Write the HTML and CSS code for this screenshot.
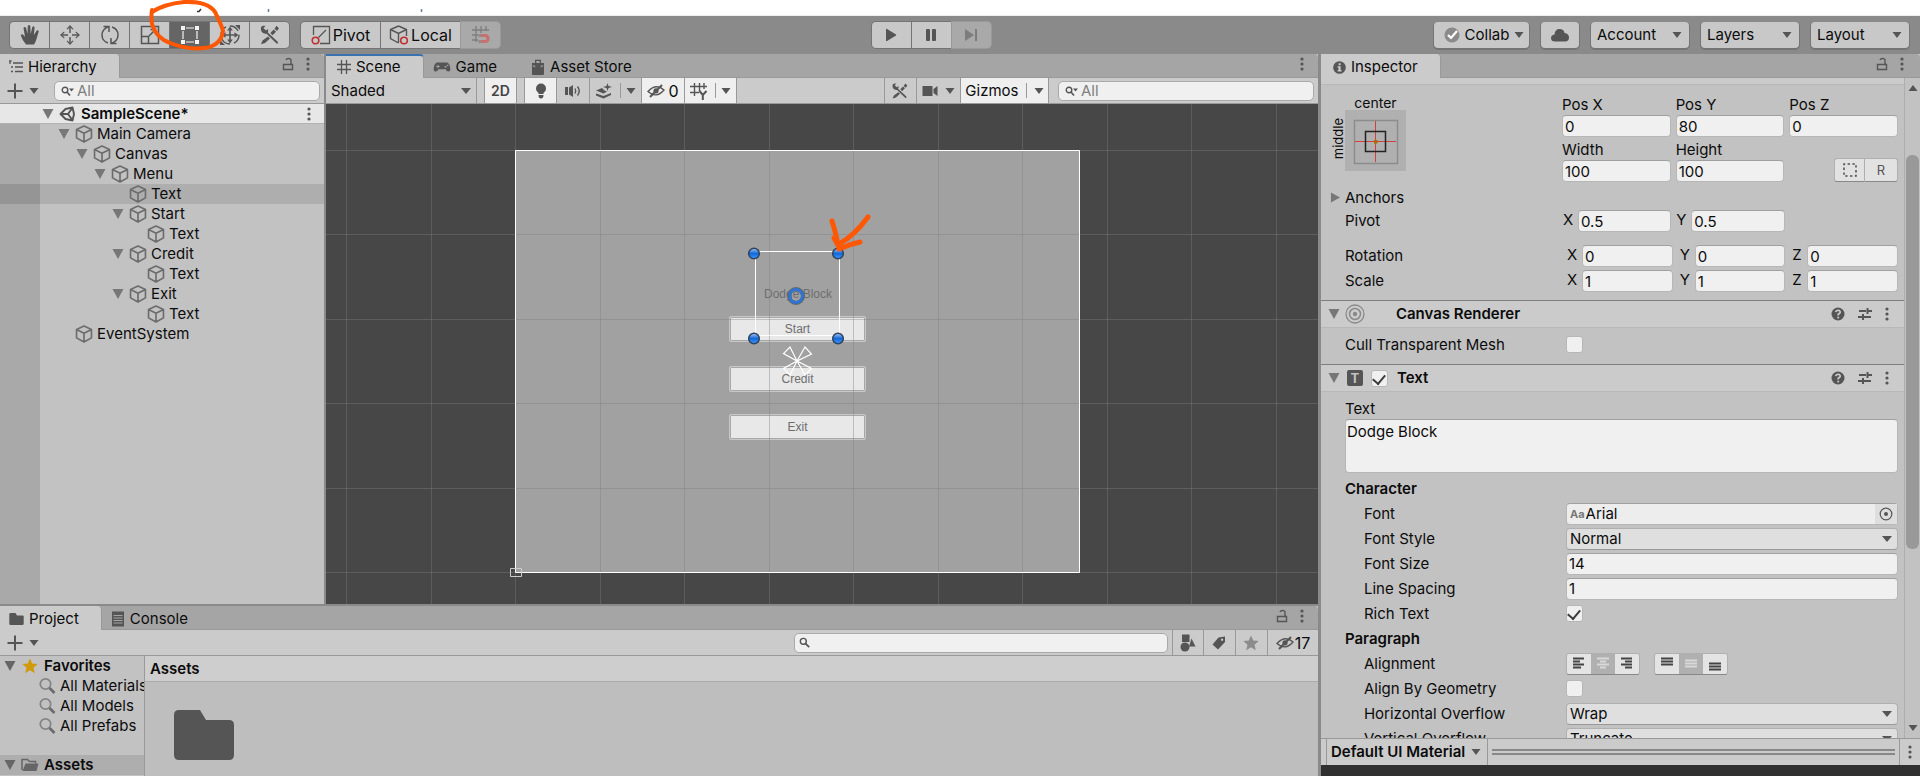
FILE: index.html
```html
<!DOCTYPE html>
<html lang="en">
<head>
    <meta charset="UTF-8">
    <meta name="viewport" content="width=device-width, initial-scale=1.0">
    <title>SampleScene</title>
    <link rel="stylesheet" href="styles.css">
</head>
<body>
    <!-- icon sprite -->
    <svg class="sprite" aria-hidden="true">
        <symbol id="i-cube" viewBox="0.7 0.2 16.6 17.6"><path d="M9 1.2 16.3 4.5 V12.8 L9 16.8 1.7 12.8 V4.5 Z M1.7 4.7 9 8.3 16.3 4.7 M9 8.3 V16.8" fill="none" stroke="currentColor" stroke-width="1.6" stroke-linejoin="round"/></symbol>
        <symbol id="i-dots" viewBox="0 0 4 14"><circle cx="2" cy="2" r="1.6"/><circle cx="2" cy="7" r="1.6"/><circle cx="2" cy="12" r="1.6"/></symbol>
        <symbol id="i-lock" viewBox="0 0 12 14"><path d="M1.5 7.5 H10.5 V12.5 H1.5 Z M9 7 V3.5 Q9 1.5 6.5 1.5 Q4.5 1.5 4 3" fill="none" stroke="currentColor" stroke-width="1.4"/></symbol>
        <symbol id="i-down" viewBox="0 0 10 10"><path d="M0.5 2 H9.5 L5 8 Z"/></symbol>
        <symbol id="i-fold" viewBox="0 0 12 12"><path d="M0.5 1 H11.5 L6 11 Z"/></symbol>
        <symbol id="i-right" viewBox="0 0 12 12"><path d="M1 0.5 V11.5 L11 6 Z"/></symbol>
        <symbol id="i-plus" viewBox="0 0 16 16"><path d="M7 0.5 H9 V7 H15.5 V9 H9 V15.5 H7 V9 H0.5 V7 H7 Z"/></symbol>
        <symbol id="i-search" viewBox="0 0 14 14"><circle cx="5.5" cy="5.5" r="3.8" fill="none" stroke="currentColor" stroke-width="1.8"/><path d="M8 8 13 13" stroke="currentColor" stroke-width="2.2"/></symbol>
        <symbol id="i-searchdd" viewBox="0 0 14 10"><circle cx="4" cy="4" r="2.8" fill="none" stroke="currentColor" stroke-width="1.4"/><path d="M6 6 9 9.5" stroke="currentColor" stroke-width="1.6"/><path d="M8 2.5 H13 L10.5 5.5 Z"/></symbol>
        <symbol id="i-glass" viewBox="0 0 18 18"><circle cx="7.5" cy="7" r="5.2" fill="none" stroke="currentColor" stroke-width="1.8"/><path d="M11.5 11 16.5 16" stroke="#6b6b6b" stroke-width="2.6"/></symbol>
        <symbol id="i-list" viewBox="0 0 14 14"><path d="M0 1 H2.5 M1 1 V4 M4 3 H14 M2 7 H4 M6 7 H14 M2 11.5 H4 M6 11.5 H14" fill="none" stroke="currentColor" stroke-width="1.3"/></symbol>
        <symbol id="i-grid" viewBox="0 0 14 14"><path d="M4.5 0 V14 M9.5 0 V14 M0 4.5 H14 M0 9.5 H14" fill="none" stroke="currentColor" stroke-width="1.3"/></symbol>
        <symbol id="i-pad" viewBox="0 0 20 12"><path fill-rule="evenodd" d="M5 1 H15 Q18 1 19 6 Q20 11 17 11 Q15 11 14 8.5 H6 Q5 11 3 11 Q0 11 1 6 Q2 1 5 1 Z M5 3.5 V5 H3.5 V6 H5 V7.5 H6 V6 H7.5 V5 H6 V3.5 Z M13 5 h2 v1.5 h-2 Z M15.5 3.5 h1.5 v1.5 h-1.5 Z"/></symbol>
        <symbol id="i-bag" viewBox="0 0 14 16"><path fill-rule="evenodd" d="M4 4 V0.8 H10 V4 H13 V15 Q13 16 12 16 H2 Q1 16 1 15 V4 Z M5.3 4 H8.7 V2 H5.3 Z M1.5 6.5 h2 l1 1 -1 .8 -1.5 -1 Z M12.5 6.5 h-2 l-1 1 1 .8 1.5 -1 Z"/></symbol>
        <symbol id="i-info" viewBox="0 0 14 14"><circle cx="7" cy="7" r="6.8"/><path d="M6 2.3 h2.2 v2.2 H6 Z M5 5.7 h3.2 v4 h1 v1.5 H5 v-1.5 h1 v-2.5 H5 Z" fill="#cbcbcb"/></symbol>
        <symbol id="i-unity" viewBox="0 0 16 16"><path d="M1.5 8 6.5 3 13.5 1.5 15 8 13.5 14.5 6.5 13 Z M1.5 8 H9 M9 8 13.5 1.8 M9 8 13.5 14.2" fill="none" stroke="currentColor" stroke-width="1.9" stroke-linejoin="round"/></symbol>
        <symbol id="i-tools" viewBox="0 0 22 22"><path d="M2 6 Q1 1 6.5 2 L4.5 4 7 6.5 9 5 Q9.5 7 8.8 8.5 L18.5 17.5 Q20 20 17.5 19.5 L7.5 9.7 Q3 10 2 6 Z M17.5 1.8 20 4.3 18 7 15.5 4.8 Z M14.8 5.5 17 7.7 13.5 11.2 11.3 9 Z M9 12.5 11 14.5 6 19 2 20.3 3.5 16.5 Z"/></symbol>
        <symbol id="i-hand" viewBox="0 0 20 22"><path d="M6 20.5 Q2.5 16.5 0.8 11.5 Q1.5 9.5 3.5 11 L5 13 3.5 4 Q4.5 2 6 3.8 L7.5 10 7.8 2 Q9 0 10.3 2 L10.7 10 12.3 3 Q13.7 1.5 14.6 3.4 L13.8 11 16.8 6.5 Q18.5 5.8 18.7 7.5 L16.5 15 Q15.5 18.5 14 20.5 Z"/></symbol>
        <symbol id="i-move" viewBox="0 0 22 22"><path d="M11 3 V9 M11 13 V19 M3 11 H9 M13 11 H19" fill="none" stroke="currentColor" stroke-width="1.5"/><path d="M8 5 H7.5 L11 1 14.5 5 13.5 5.5 11 3 8.5 5.5 Z M8 17 7.5 17 11 21 14.5 17 13.5 16.5 11 19 8.5 16.5 Z M5 7.5 1 11 5 14.5 5.5 13.5 3 11 5.5 8.5 Z M17 7.5 21 11 17 14.5 16.5 13.5 19 11 16.5 8.5 Z"/></symbol>
        <symbol id="i-rotate" viewBox="0 0 22 22"><path d="M9 19 Q3 17 3 11 Q3 5 10 2.5 M13 3 Q19 5 19 11 Q19 17 12 19.5 M4.5 2.5 H10 V8 M17.5 19.5 H12 V14" fill="none" stroke="currentColor" stroke-width="1.5"/></symbol>
        <symbol id="i-scale" viewBox="0 0 22 22"><path d="M2.5 2.5 H19.5 V19.5 H2.5 Z M2.5 12.5 H9.5 V19.5 M10 12 16 6 M11.5 5.5 H16.5 V10.5" fill="none" stroke="currentColor" stroke-width="1.5"/></symbol>
        <symbol id="i-rect" viewBox="0 0 20 20"><path d="M3 6 V14 M17 6 V14 M6 3 H14 M6 17 H14" fill="none" stroke="currentColor" stroke-width="1.2"/><path d="M1 1 h4 v4 h-4 Z M15 1 h4 v4 h-4 Z M1 15 h4 v4 h-4 Z M15 15 h4 v4 h-4 Z"/></symbol>
        <symbol id="i-transform" viewBox="0 0 22 22"><circle cx="11" cy="11" r="9" fill="none" stroke="currentColor" stroke-width="1.4" stroke-dasharray="10 4"/><path d="M11 4 V18 M4 11 H18" stroke="currentColor" stroke-width="1.6"/><path d="M11 2.5 13.8 6.5 H8.2 Z M11 19.5 13.8 15.5 H8.2 Z M2.5 11 6.5 8.2 V13.8 Z M19.5 11 15.5 8.2 V13.8 Z M16 1 H21 V6 Z M1 16 V21 H6 Z"/></symbol>
        <symbol id="i-pivot" viewBox="0 0 20 20"><path d="M2.5 10 V1.5 H18.5 V18.5 H9 M7.5 12.5 15 5" fill="none" stroke="currentColor" stroke-width="1.3"/><circle cx="4.5" cy="15.5" r="3.3" fill="none" stroke="#c03030" stroke-width="1.6"/></symbol>
        <symbol id="i-local" viewBox="0 0 20 20"><path d="M9.5 1 17.5 4.5 V11 M9.5 18 1.5 13.5 V4.5 L9.5 1 M1.5 4.5 9.5 8.5 17.5 4.5 M9.5 8.5 V18" fill="none" stroke="currentColor" stroke-width="1.4"/><circle cx="15" cy="15.5" r="3.3" fill="none" stroke="#c03030" stroke-width="1.6"/></symbol>
        <symbol id="i-snap" viewBox="0 0 20 20"><path d="M5 1 V17 M10 1 V8 M15 1 V6 M1 5 H18 M1 10 H7 M1 15 H7" fill="none" stroke="currentColor" stroke-width="1.3"/><path d="M9 10.5 H14 Q17 10.5 17 13.5 Q17 16.5 14 16.5 H9" fill="none" stroke="#c87070" stroke-width="3"/><path d="M7.500 9 h2.500 v3 h-2.500 Z M7.500 15 h2.500 v3 h-2.500 Z" fill="#8c8c8c"/></symbol>
        <symbol id="i-play" viewBox="0 0 12 14"><path d="M1 1.5 Q1 0.5 2 1 L11 6.5 Q11.5 7 11 7.5 L2 13 Q1 13.5 1 12.5 Z"/></symbol>
        <symbol id="i-pause" viewBox="0 0 12 14"><rect x="1" y="1" width="4" height="12" rx="1"/><rect x="7" y="1" width="4" height="12" rx="1"/></symbol>
        <symbol id="i-step" viewBox="0 0 14 14"><path d="M1 1 10 7 1 13 Z M11 1 h2 v12 h-2 Z"/></symbol>
        <symbol id="i-cloud" viewBox="0 0 20 14"><path d="M5 13.5 Q1 13.5 1 10 Q1 7 4.5 6.5 Q5 1 9.5 1 Q14 1 14.5 5 Q19 5.5 19 9.5 Q19 13.5 15 13.5 Z"/></symbol>
        <symbol id="i-bulb" viewBox="0 0 12 16"><circle cx="6" cy="5.5" r="5"/><path d="M3.5 8 H8.5 V11 H3.5 Z M3.5 12 H8.5 Q8.5 15.5 6 15.5 Q3.5 15.5 3.5 12 Z"/></symbol>
        <symbol id="i-sound" viewBox="0 0 18 14"><path d="M1 3 H4 V11 H1 Z M5 3.500 9 1 V13 L5 10.500 Z"/><path d="M11 4.5 Q12.5 7 11 9.5 M13.5 2.5 Q17 7 13.5 11.5" fill="none" stroke="currentColor" stroke-width="1.4"/></symbol>
        <symbol id="i-fx" viewBox="0 0 18 16"><path d="M12.5 0 13.5 3 17 4 13.5 5 12.5 8 11.5 5 8 4 11.5 3 Z M1 7.5 7 5 9.5 7.5 12 8.5 8.5 10.5 Z M1 10.5 8.5 13 16 10 16 12 8.5 15.5 1 12.5 Z"/></symbol>
        <symbol id="i-eye" viewBox="0 0 18 14"><path d="M1 7.5 Q9 -1 17 6 Q9 15 1 7.5 Z" fill="none" stroke="currentColor" stroke-width="1.4"/><circle cx="9" cy="6.8" r="2.6"/><path d="M3 13 15 1" stroke="currentColor" stroke-width="2"/></symbol>
        <symbol id="i-gridy" viewBox="0 0 18 18"><path d="M4.5 1 V14 M9.5 1 V9 M14 1 V7 M0 4.5 H17 M0 10.5 H9" fill="none" stroke="currentColor" stroke-width="1.4"/><path d="M9.5 9 12.8 13 16.5 9 M12.8 13 V18" fill="none" stroke="currentColor" stroke-width="2"/></symbol>
        <symbol id="i-cam" viewBox="0 0 16 12"><path d="M0.5 1 H10.5 V11 H0.5 Z M11.5 4 15.5 1 V11 L11.5 8 Z"/></symbol>
        <symbol id="i-help" viewBox="0 0 14 14"><circle cx="7" cy="7" r="6.5"/><path d="M4.7 5.2 Q5 3.2 7.2 3.2 Q9.5 3.5 9.2 5.5 Q8.5 6.7 7.2 7.3 V8.5" fill="none" stroke="#cbcbcb" stroke-width="1.6"/><path d="M6.3 9.7 h1.8 v1.7 h-1.8 Z" fill="#cbcbcb"/></symbol>
        <symbol id="i-preset" viewBox="0 0 14 14"><path d="M1 4 H8 M10 4 H14 M0 10 H4 M6 10 H13 M9.5 1 V7 M5 7 V13" fill="none" stroke="currentColor" stroke-width="2"/></symbol>
        <symbol id="i-target" viewBox="0 0 20 20"><circle cx="10" cy="10" r="9" fill="none" stroke="currentColor" stroke-width="1.3"/><circle cx="10" cy="10" r="5.5" fill="none" stroke="currentColor" stroke-width="1.5"/><circle cx="10" cy="10" r="2.2"/></symbol>
        <symbol id="i-picker" viewBox="0 0 14 14"><circle cx="7" cy="7" r="5.8" fill="none" stroke="currentColor" stroke-width="1.2"/><circle cx="7" cy="7" r="2"/></symbol>
        <symbol id="i-folder" viewBox="0 0 60 50"><path d="M5 0 H26 L32 10 H55 Q60 10 60 15 V45 Q60 50 55 50 H5 Q0 50 0 45 V5 Q0 0 5 0 Z"/></symbol>
        <symbol id="i-folderopen" viewBox="0 0 18 14"><path d="M1 12 V1.5 H6.5 L8.5 3.5 H14.5 V5.5" fill="none" stroke="currentColor" stroke-width="1.5"/><path d="M4.5 5.5 H17.5 L15.5 13 H1.5 Z"/></symbol>
        <symbol id="i-doc" viewBox="0 0 14 16"><path d="M1 0.5 H13 V15.5 H1 Z"/><path d="M2.5 4.5 H11.5 M2.5 7 H11.5 M2.5 9.5 H11.5 M2.5 12 H11.5" stroke="#a5a5a5"/></symbol>
        <symbol id="i-star" viewBox="0 0 16 16"><path d="M8 0.5 10.2 5.5 15.7 6 11.5 9.7 12.8 15.3 8 12.3 3.2 15.3 4.5 9.7 0.3 6 5.8 5.5 Z"/></symbol>
        <symbol id="i-shapes" viewBox="0 0 16 18"><path d="M2 0.5 h7.5 v7.5 h-7.5 Z M11.5 4.5 15.5 12.5 H9 Z"/><circle cx="5" cy="13" r="4.5"/></symbol>
        <symbol id="i-tag" viewBox="0 0 14 14"><path fill-rule="evenodd" d="M6.5 1.5 13 0.5 V6 L6 13.5 0.5 8.5 Z M10 2.5 a1.2 1.2 0 1 0 .1 0 Z"/></symbol>
        <symbol id="i-dashed" viewBox="0 0 14 14"><path d="M1 1 H13 V13 H1 Z" fill="none" stroke="currentColor" stroke-width="1.6" stroke-dasharray="2.4 2.4" stroke-dashoffset="1.200"/></symbol>
    </svg>

    <div class="strip">
        <svg width="440" height="15" aria-hidden="true"><path d="M197 11.5 H199 L201 9" fill="none" stroke="#333" stroke-width="1.5"/><path d="M268.5 9 V12 M421.5 9 V12" stroke="#6a7d9c" stroke-width="1.5"/></svg>
    </div>

    <header class="toolbar">
        <div class="tools">
            <div class="group">
                <button class="tool" aria-label="Hand"><svg width="20" height="22"><use href="#i-hand"/></svg></button>
                <button class="tool" aria-label="Move"><svg width="22" height="22"><use href="#i-move"/></svg></button>
                <button class="tool" aria-label="Rotate"><svg width="22" height="22"><use href="#i-rotate"/></svg></button>
                <button class="tool" aria-label="Scale"><svg width="22" height="22"><use href="#i-scale"/></svg></button>
                <button class="tool on" aria-label="Rect">
                    <svg width="20" height="20"><use href="#i-rect"/></svg>
                    <svg class="circle" width="82" height="58" viewBox="0 0 82 58" aria-hidden="true"><path d="M6 15 Q18 7 38 5 Q62 4 69 15 Q76 29 77 34 Q75 49 58 51 Q42 53 24 46 Q10 41 6 27 Q5 18 6 13" fill="none" stroke="#ff5805" stroke-width="4" stroke-linecap="round"/></svg>
                </button>
                <button class="tool" aria-label="Transform"><svg width="22" height="22"><use href="#i-transform"/></svg></button>
                <button class="tool" aria-label="Custom tools"><svg width="22" height="22"><use href="#i-tools"/></svg></button>
            </div>
            <div class="group">
                <button class="tool wide"><svg width="20" height="20"><use href="#i-pivot"/></svg>Pivot</button>
                <button class="tool wide"><svg width="20" height="20"><use href="#i-local"/></svg>Local</button>
                <button class="tool off" aria-label="Grid snapping" disabled><svg width="20" height="20"><use href="#i-snap"/></svg></button>
            </div>
        </div>
        <div class="group">
            <button class="tool" aria-label="Play"><svg width="12" height="14"><use href="#i-play"/></svg></button>
            <button class="tool" aria-label="Pause"><svg width="12" height="14"><use href="#i-pause"/></svg></button>
            <button class="tool off" aria-label="Step" disabled><svg width="14" height="14"><use href="#i-step"/></svg></button>
        </div>
        <div class="menus">
            <button class="menu collab"><svg width="16" height="16" viewBox="0 0 16 16"><circle cx="8" cy="8" r="7.5" fill="#8a8a8a"/><path d="M4 8 7 11 13 4" fill="none" stroke="#fff" stroke-width="2.2"/></svg>Collab<svg width="10" height="10"><use href="#i-down"/></svg></button>
            <button class="menu cloud" aria-label="Cloud"><svg width="20" height="14"><use href="#i-cloud"/></svg></button>
            <button class="menu">Account<svg width="10" height="10"><use href="#i-down"/></svg></button>
            <button class="menu">Layers<svg width="10" height="10"><use href="#i-down"/></svg></button>
            <button class="menu">Layout<svg width="10" height="10"><use href="#i-down"/></svg></button>
        </div>
    </header>

    <main class="workspace">
        <div class="left">
            <div class="upper">
                <section class="panel hierarchy">
                    <div class="tabs">
                        <button class="tab active"><svg width="14" height="14"><use href="#i-list"/></svg>Hierarchy</button>
                        <div class="tab-end"><svg width="12" height="14"><use href="#i-lock"/></svg><svg width="4" height="14"><use href="#i-dots"/></svg></div>
                    </div>
                    <div class="bar">
                        <button class="add" aria-label="Create"><svg width="16" height="16"><use href="#i-plus"/></svg><svg width="10" height="10"><use href="#i-down"/></svg></button>
                        <label class="search grow"><svg width="14" height="10"><use href="#i-searchdd"/></svg><input type="text" placeholder="All" aria-label="Search hierarchy"></label>
                    </div>
                    <div class="scene-row"><svg class="fold" width="12" height="12"><use href="#i-fold"/></svg><svg width="16" height="16"><use href="#i-unity"/></svg><b>SampleScene*</b><svg class="end" width="4" height="14"><use href="#i-dots"/></svg></div>
                    <ul class="tree">
                        <li><span class="node"><svg class="fold" width="12" height="12"><use href="#i-fold"/></svg><svg width="18" height="18"><use href="#i-cube"/></svg>Main Camera</span>
                            <ul>
                                <li><span class="node"><svg class="fold" width="12" height="12"><use href="#i-fold"/></svg><svg width="18" height="18"><use href="#i-cube"/></svg>Canvas</span>
                                    <ul>
                                        <li><span class="node"><svg class="fold" width="12" height="12"><use href="#i-fold"/></svg><svg width="18" height="18"><use href="#i-cube"/></svg>Menu</span>
                                            <ul>
                                                <li><span class="node leaf selected"><svg width="18" height="18"><use href="#i-cube"/></svg>Text</span></li>
                                                <li><span class="node"><svg class="fold" width="12" height="12"><use href="#i-fold"/></svg><svg width="18" height="18"><use href="#i-cube"/></svg>Start</span>
                                                    <ul><li><span class="node leaf"><svg width="18" height="18"><use href="#i-cube"/></svg>Text</span></li></ul>
                                                </li>
                                                <li><span class="node"><svg class="fold" width="12" height="12"><use href="#i-fold"/></svg><svg width="18" height="18"><use href="#i-cube"/></svg>Credit</span>
                                                    <ul><li><span class="node leaf"><svg width="18" height="18"><use href="#i-cube"/></svg>Text</span></li></ul>
                                                </li>
                                                <li><span class="node"><svg class="fold" width="12" height="12"><use href="#i-fold"/></svg><svg width="18" height="18"><use href="#i-cube"/></svg>Exit</span>
                                                    <ul><li><span class="node leaf"><svg width="18" height="18"><use href="#i-cube"/></svg>Text</span></li></ul>
                                                </li>
                                            </ul>
                                        </li>
                                    </ul>
                                </li>
                            </ul>
                        </li>
                        <li><span class="node leaf"><svg width="18" height="18"><use href="#i-cube"/></svg>EventSystem</span></li>
                    </ul>
                </section>

                <section class="panel scene">
                    <div class="tabs">
                        <button class="tab active focus"><svg width="14" height="14"><use href="#i-grid"/></svg>Scene</button>
                        <button class="tab"><svg width="18" height="12"><use href="#i-pad"/></svg>Game</button>
                        <button class="tab"><svg width="14" height="16"><use href="#i-bag"/></svg>Asset Store</button>
                        <div class="tab-end"><svg width="4" height="14"><use href="#i-dots"/></svg></div>
                    </div>
                    <div class="bar scene-bar">
                        <span class="select shaded"><select aria-label="Draw mode"><option>Shaded</option></select></span>
                        <button class="cell lit two-d">2D</button>
                        <button class="cell lit" aria-label="Lighting"><svg width="12" height="16"><use href="#i-bulb"/></svg></button>
                        <button class="cell" aria-label="Audio"><svg width="18" height="14"><use href="#i-sound"/></svg></button>
                        <button class="cell split" aria-label="Effects"><svg width="18" height="16"><use href="#i-fx"/></svg><i></i><svg width="10" height="10"><use href="#i-down"/></svg></button>
                        <button class="cell lit hidden-count"><svg width="18" height="14"><use href="#i-eye"/></svg>0</button>
                        <button class="cell lit split" aria-label="Grid"><svg width="18" height="18"><use href="#i-gridy"/></svg><i></i><svg width="10" height="10"><use href="#i-down"/></svg></button>
                        <span class="grow"></span>
                        <button class="cell first" aria-label="Tools"><svg width="18" height="18"><use href="#i-tools"/></svg></button>
                        <button class="cell cam" aria-label="Camera"><svg width="16" height="12"><use href="#i-cam"/></svg><svg width="10" height="10"><use href="#i-down"/></svg></button>
                        <button class="cell lit gizmos">Gizmos<i></i><svg width="10" height="10"><use href="#i-down"/></svg></button>
                        <label class="search scene-search"><svg width="14" height="10"><use href="#i-searchdd"/></svg><input type="text" placeholder="All" aria-label="Search scene"></label>
                    </div>
                    <div class="viewport">
                        <!-- the game canvas, everything in it sits at its own scene position -->
                        <div class="game-canvas">
                            <span class="title">Dodge Block</span>
                            <button class="game-btn start">Start</button>
                            <button class="game-btn credit">Credit</button>
                            <button class="game-btn exit">Exit</button>
                        </div>
                        <svg class="overlay" width="992" height="500" viewBox="0 0 992 500" aria-hidden="true">
                            <defs>
                                <linearGradient id="knob" x1="0" y1="0" x2="0" y2="1"><stop offset="0" stop-color="#a8c8f0"/><stop offset=".5" stop-color="#1468d8"/><stop offset="1" stop-color="#3c98ff"/></linearGradient>
                            </defs>
                            <path class="grid-lines" d="M20.5 0 V500 M105.5 0 V500 M189.5 0 V500 M274.5 0 V500 M358.5 0 V500 M443.5 0 V500 M527.5 0 V500 M612.5 0 V500 M696.5 0 V500 M781.5 0 V500 M865.5 0 V500 M950.5 0 V500 M0 46.5 H992 M0 130.5 H992 M0 215.5 H992 M0 299.5 H992 M0 384.5 H992 M0 468.5 H992"/>
                            <path d="M189.5 46.5 H753.5 V468.5 H189.5 Z" fill="none" stroke="#fff"/>
                            <path d="M184.5 464.5 H195.5 V472.5 H184.5 Z" fill="none" stroke="#ccc"/>
                            <path d="M429.5 147.5 H513.5 V231.5 H429.5 Z" fill="none" stroke="#fff"/>
                            <g fill="url(#knob)" stroke="#30435e" stroke-width="1.5">
                                <circle cx="428" cy="149.5" r="5.3"/><circle cx="512" cy="149.5" r="5.3"/><circle cx="428" cy="234.5" r="5.3"/><circle cx="512" cy="234.5" r="5.3"/>
                            </g>
                            <circle cx="470" cy="192" r="7" fill="none" stroke="#666" stroke-width="4"/>
                            <circle cx="470" cy="192" r="6.5" fill="none" stroke="#2f74d0" stroke-width="3"/>
                            <path d="M471 257 464 243 457.5 249.5 Z M471 257 479 243 485.5 250 Z M471 257 457.5 264.5 464 271 Z M471 257 485.5 264.5 479 271 Z" fill="none" stroke="#fff" stroke-width="1.2"/>
                            <path d="M506 117 Q510 130 511 136 L508 134 L513 143 M542 113 Q528 132 513 140 M534 138 Q524 140 513 145" fill="none" stroke="#ff5805" stroke-width="5" stroke-linecap="round" stroke-linejoin="round"/>
                        </svg>
                    </div>
                </section>
            </div>

            <section class="panel project">
                <div class="tabs">
                    <button class="tab active"><svg width="15" height="12"><use href="#i-folder"/></svg>Project</button>
                    <button class="tab"><svg width="14" height="16"><use href="#i-doc"/></svg>Console</button>
                    <div class="tab-end"><svg width="12" height="14"><use href="#i-lock"/></svg><svg width="4" height="14"><use href="#i-dots"/></svg></div>
                </div>
                <div class="bar">
                    <button class="add" aria-label="Create asset"><svg width="16" height="16"><use href="#i-plus"/></svg><svg width="10" height="10"><use href="#i-down"/></svg></button>
                    <span class="grow"></span>
                    <label class="search project-search"><svg width="11" height="11"><use href="#i-search"/></svg><input type="text" aria-label="Search project"></label>
                    <button class="cell first" aria-label="Search by type"><svg width="16" height="18"><use href="#i-shapes"/></svg></button>
                    <button class="cell" aria-label="Search by label"><svg width="14" height="14"><use href="#i-tag"/></svg></button>
                    <button class="cell dim" aria-label="Save search"><svg width="16" height="16"><use href="#i-star"/></svg></button>
                    <button class="cell hidden-count last"><svg width="18" height="14"><use href="#i-eye"/></svg>17</button>
                </div>
                <div class="browser">
                    <ul class="folders">
                        <li class="head"><svg class="fold" width="12" height="12"><use href="#i-fold"/></svg><svg class="gold" width="18" height="16"><use href="#i-star"/></svg><b>Favorites</b></li>
                        <li><svg width="18" height="18"><use href="#i-glass"/></svg>All Materials</li>
                        <li><svg width="18" height="18"><use href="#i-glass"/></svg>All Models</li>
                        <li><svg width="18" height="18"><use href="#i-glass"/></svg>All Prefabs</li>
                        <li class="head root"><svg class="fold" width="12" height="12"><use href="#i-fold"/></svg><svg width="18" height="14"><use href="#i-folderopen"/></svg><b>Assets</b></li>
                    </ul>
                    <div class="files">
                        <div class="crumb"><b>Assets</b></div>
                        <svg class="big-folder" width="60" height="50"><use href="#i-folder"/></svg>
                    </div>
                </div>
            </section>
        </div>

        <section class="panel inspector">
            <div class="tabs">
                <button class="tab active"><svg width="13" height="13"><use href="#i-info"/></svg>Inspector</button>
                <div class="tab-end"><svg width="12" height="14"><use href="#i-lock"/></svg><svg width="4" height="14"><use href="#i-dots"/></svg></div>
            </div>
            <div class="scroll">
                <div class="content">
                    <div class="cut"></div>
                    <div class="rect-transform">
                        <div class="rect-top">
                            <div class="anchor">
                                <span class="middle">middle</span>
                                <span class="center">center</span>
                                <button class="anchor-box" aria-label="Anchor presets">
                                    <svg width="60" height="60" viewBox="0 0 60 60"><path d="M9.5 9.5 H52.5 V52.5 H9.5 Z" fill="none" stroke="#8c8c8c" stroke-width="1.5"/><path d="M30.5 10 V51 M10 30.5 H51" stroke="#d04040"/><path d="M20.5 20.5 H40.5 V40.5 H20.5 Z" fill="none" stroke="#222" stroke-width="1.5"/><path d="M29 29 h3.5 v3.5 h-3.5 Z" fill="#a86c00"/></svg>
                                </button>
                            </div>
                            <div class="numbers">
                                <label>Pos X<input type="text" value="0"></label>
                                <label>Pos Y<input type="text" value="80"></label>
                                <label>Pos Z<input type="text" value="0"></label>
                                <label>Width<input type="text" value="100"></label>
                                <label>Height<input type="text" value="100"></label>
                                <div class="raw"><button aria-label="Blueprint mode"><svg width="14" height="14"><use href="#i-dashed"/></svg></button><button>R</button></div>
                            </div>
                        </div>
                        <div class="vec anchors-row"><span><svg class="fold" width="11" height="11"><use href="#i-right"/></svg>Anchors</span></div>
                        <div class="vec pivot-row"><span>Pivot</span><label>X<input type="text" value="0.5"></label><label>Y<input type="text" value="0.5"></label></div>
                        <div class="vec"><span>Rotation</span><label>X<input type="text" value="0"></label><label>Y<input type="text" value="0"></label><label>Z<input type="text" value="0"></label></div>
                        <div class="vec"><span>Scale</span><label>X<input type="text" value="1"></label><label>Y<input type="text" value="1"></label><label>Z<input type="text" value="1"></label></div>
                    </div>

                    <div class="comp-head">
                        <svg class="fold" width="12" height="12"><use href="#i-fold"/></svg>
                        <svg class="dimmed" width="20" height="20"><use href="#i-target"/></svg>
                        <h2>Canvas Renderer</h2>
                        <span class="comp-icons"><svg width="14" height="14"><use href="#i-help"/></svg><svg width="14" height="14"><use href="#i-preset"/></svg><svg width="4" height="14"><use href="#i-dots"/></svg></span>
                    </div>
                    <div class="comp-body cull">
                        <div class="row"><label for="cull">Cull Transparent Mesh</label><input type="checkbox" id="cull"></div>
                    </div>

                    <div class="comp-head">
                        <svg class="fold" width="12" height="12"><use href="#i-fold"/></svg>
                        <span class="t-icon">T</span>
                        <input type="checkbox" aria-label="Enable Text" checked>
                        <h2>Text</h2>
                        <span class="comp-icons"><svg width="14" height="14"><use href="#i-help"/></svg><svg width="14" height="14"><use href="#i-preset"/></svg><svg width="4" height="14"><use href="#i-dots"/></svg></span>
                    </div>
                    <div class="comp-body">
                        <label class="text-label" for="text">Text</label>
                        <textarea id="text">Dodge Block</textarea>
                        <h3>Character</h3>
                        <div class="row sub"><label for="font">Font</label><div class="object"><small>Aa</small><input type="text" id="font" value="Arial"><button aria-label="Pick font"><svg width="14" height="14"><use href="#i-picker"/></svg></button></div></div>
                        <div class="row sub"><label for="style">Font Style</label><span class="select"><select id="style"><option>Normal</option></select></span></div>
                        <div class="row sub"><label for="size">Font Size</label><input type="text" id="size" value="14"></div>
                        <div class="row sub"><label for="spacing">Line Spacing</label><input type="text" id="spacing" value="1"></div>
                        <div class="row sub"><label for="rich">Rich Text</label><input type="checkbox" id="rich" checked></div>
                        <h3>Paragraph</h3>
                        <div class="row sub"><span>Alignment</span>
                            <div class="aligns">
                                <div class="seg">
                                    <button aria-label="Left"><svg width="14" height="14"><path d="M1 1.500 H12 M1 4.500 H8 M1 7.500 H12 M1 10.500 H9"/></svg></button>
                                    <button class="on" aria-label="Center"><svg width="14" height="14"><path d="M1 1.500 H13 M4 4.500 H10 M1 7.500 H13 M4 10.500 H10"/></svg></button>
                                    <button aria-label="Right"><svg width="14" height="14"><path d="M1 1.500 H12 M5 4.500 H12 M1 7.500 H12 M5 10.500 H12"/></svg></button>
                                </div>
                                <div class="seg">
                                    <button aria-label="Top"><svg width="14" height="14"><path d="M1 1.500 H13 M1 4.500 H13 M1 7.500 H13"/></svg></button>
                                    <button class="on" aria-label="Middle"><svg width="14" height="14"><path d="M1 3.500 H13 M1 6.500 H13 M1 9.500 H13"/></svg></button>
                                    <button aria-label="Bottom"><svg width="14" height="14"><path d="M1 6.500 H13 M1 9.500 H13 M1 12.500 H13"/></svg></button>
                                </div>
                            </div>
                        </div>
                        <div class="row sub"><label for="geometry">Align By Geometry</label><input type="checkbox" id="geometry"></div>
                        <div class="row sub"><label for="hover">Horizontal Overflow</label><span class="select"><select id="hover"><option>Wrap</option></select></span></div>
                        <div class="row sub"><label for="vover">Vertical Overflow</label><span class="select"><select id="vover"><option>Truncate</option></select></span></div>
                    </div>
                </div>
                <div class="scrollbar">
                    <svg class="up" width="10" height="10"><use href="#i-down"/></svg>
                    <div class="thumb"></div>
                    <svg width="10" height="10"><use href="#i-down"/></svg>
                </div>
            </div>
            <div class="preview-bar">
                <button><b>Default UI Material</b><svg width="10" height="10"><use href="#i-down"/></svg></button>
                <span class="grip"></span>
                <span class="more"><svg width="4" height="14"><use href="#i-dots"/></svg></span>
            </div>
            <div class="preview"></div>
        </section>
    </main>
</body>
</html>
```
FILE: styles.css
```css
* {
    box-sizing: border-box;
}
body {
    margin: 0;
    height: 100vh;
    display: flex;
    flex-direction: column;
    overflow: hidden;
    background: #8a8a8a;
    color: #0c0c0c;
    font-family: Inter, "Liberation Sans", sans-serif;
    font-size: 15px;
    line-height: 20px;
}
button, input, select, textarea {
    margin: 0;
    padding: 0;
    border: none;
    border-radius: 0;
    outline: none;
    background: none;
    color: inherit;
    font: inherit;
}
button {
    display: flex;
    align-items: center;
    justify-content: center;
    white-space: nowrap;
}
svg {
    flex: none;
    fill: currentColor;
    color: #555;
}
ul {
    list-style: none;
    margin: 0;
    padding: 0;
}
b, h2, h3 {
    margin: 0;
    font-size: 15px;
    font-weight: 600;
}
.sprite {
    position: absolute;
    width: 0;
    height: 0;
}
.fold {
    color: #777;
}
.grow {
    flex: 1;
}
.strip {
    height: 16px;
    flex: none;
    background: #fff;
    border-bottom: 1px solid #eee;
}
.strip svg {
    display: block;
}

/* main toolbar */
.toolbar {
    flex: none;
    height: 38px;
    padding: 6px 11px 0 10px;
    display: grid;
    grid-template-columns: 1fr auto 1.066fr;
    align-items: start;
}
.tools {
    display: flex;
    gap: 12px;
}
.group {
    display: flex;
    gap: 1px;
}
.tool {
    position: relative;
    width: 39px;
    height: 26px;
    background: #c8c8c8;
    box-shadow: 0 0 0 1px #747474;
}
.tool:first-child {
    border-radius: 4px 0 0 4px;
}
.tool:last-child {
    border-radius: 0 4px 4px 0;
}
.tool.on {
    background: #656565;
}
.tool.on svg {
    color: #f4f4f4;
}
.tool.off {
    background: #a9a9a9;
    box-shadow: 0 0 0 1px #999;
}
.tool.off svg {
    color: #7d7d7d;
}
.tool.wide {
    width: 79px;
    gap: 2px;
    font-size: 16px;
}
.circle {
    position: absolute;
    left: -24px;
    top: -25px;
    z-index: 5;
}
.menus {
    display: flex;
    justify-content: flex-end;
    gap: 12px;
}
.menu {
    width: 98px;
    height: 26px;
    padding: 0 7px 0 6px;
    justify-content: space-between;
    background: #c8c8c8;
    border-radius: 4px;
    box-shadow: 0 1px 0 1px #757575;
}
.menu.collab {
    width: 95px;
    padding: 0 5px 0 10px;
    gap: 3px;
}
.menu.cloud {
    width: 38px;
    justify-content: center;
}

/* docked panels */
.workspace {
    flex: 1;
    min-height: 0;
    display: grid;
    grid-template-columns: minmax(0, 2.2fr) minmax(0, 1fr);
    gap: 3px;
}
.left {
    min-height: 0;
    display: grid;
    grid-template-rows: minmax(0, 1fr) 170px;
    gap: 2px;
}
.upper {
    min-height: 0;
    display: grid;
    grid-template-columns: 324px minmax(0, 1fr);
    gap: 2px;
}
.panel {
    display: flex;
    flex-direction: column;
    min-height: 0;
    min-width: 0;
    background: #c2c2c2;
}
.tabs {
    flex: none;
    display: flex;
    height: 24px;
    background: #a5a5a5;
    border-bottom: 1px solid #999;
    border-radius: 0 4px 0 0;
}
.tab {
    height: 23px;
    padding: 2px 22px 0 9px;
    gap: 5px;
}
.tab.active {
    height: 24px;
    background: #cbcbcb;
    border-right: 1px solid #999;
    border-radius: 0 4px 0 0;
}
.tab.focus {
    padding: 0 22px 0 11px;
    border-top: 2px solid #3a72b0;
}
.scene .tab + .tab {
    padding-right: 25px;
}
.tab-end {
    margin-left: auto;
    padding: 0 14px 3px 0;
    display: flex;
    align-items: center;
    gap: 12px;
}
.inspector .tab {
    padding-left: 12px;
}
.inspector .tab-end {
    padding-right: 16px;
}
.bar {
    flex: none;
    display: flex;
    align-items: center;
    height: 26px;
    padding-right: 4px;
    background: #cbcbcb;
    border-bottom: 1px solid #999;
}
.add {
    width: 45px;
    padding-left: 7px;
    margin-right: 9px;
    gap: 6px;
    justify-content: flex-start;
}
.search {
    display: flex;
    align-items: center;
    height: 20px;
    gap: 2px;
    padding-left: 6px;
    background: #f0f0f0;
    border: 1px solid #aaa;
    border-radius: 5px;
}
.search input {
    flex: 1;
    min-width: 0;
}
.search input::placeholder {
    color: #808080;
}
.scene-search {
    width: 256px;
    margin-left: 9px;
}
.project-search {
    width: 374px;
    margin-right: 4px;
    padding-left: 4px;
}

/* toolbar cells */
.cell {
    height: 25px;
    width: 33px;
    border-right: 1px solid #999;
}
.cell.first {
    border-left: 1px solid #999;
}
.cell.lit {
    background: #efefef;
}
.cell i {
    width: 1px;
    height: 15px;
    background: #999;
}
.cell.split {
    width: 52px;
    gap: 7px;
}
.cell.split i {
    margin-right: -2px;
}
.cell.hidden-count {
    width: 43px;
    gap: 3px;
    font-size: 16px;
}
.cell.two-d {
    margin: 0 7px;
    border-left: 1px solid #999;
    color: #444;
    font-size: 14px;
    font-weight: 600;
}
.cell.two-d + .cell {
    border-left: 1px solid #999;
}
.cell.cam {
    width: 44px;
    gap: 7px;
}
.cell.gizmos {
    width: 88px;
    gap: 7px;
}
.cell.dim svg {
    color: #8c8c8c;
}
.project .bar {
    padding-right: 0;
}
.project .cell {
    width: 32px;
}
.project .cell.last {
    width: 50px;
    border-right: none;
    gap: 1px;
}
.select {
    position: relative;
    display: block;
}
.select select {
    appearance: none;
    width: 100%;
    height: 22px;
    padding: 0 3px;
    background: #dfdfdf;
    border: 1px solid #b0b0b0;
    border-bottom-color: #999;
    border-radius: 4px;
}
.select::after {
    content: "";
    position: absolute;
    right: 6px;
    top: 8px;
    border: 5px solid transparent;
    border-top: 6px solid #555;
    border-bottom: none;
}
.select.shaded {
    width: 151px;
    border-right: 1px solid #999;
}
.shaded select {
    height: 25px;
    padding: 0 5px;
    background: none;
    border: none;
}
.shaded::after {
    top: 10px;
    right: 5px;
}

/* hierarchy */
.scene-row {
    flex: none;
    display: flex;
    align-items: center;
    gap: 5px;
    height: 20px;
    padding: 0 13px 0 42px;
    background: #e7e7e7;
    border-bottom: 1px solid #b2b2b2;
}
.scene-row b {
    margin-left: 1px;
}
.scene-row .end {
    margin-left: auto;
}
.tree {
    flex: 1;
    padding-left: 58px;
    background: linear-gradient(to right, #a9a9a9 40px, #c2c2c2 40px);
    overflow: hidden;
}
.tree ul {
    padding-left: 18px;
}
.node {
    display: flex;
    align-items: center;
    height: 20px;
    gap: 4px;
}
.node .fold + svg {
    margin-left: 1px;
}
.tree .node svg:not(.fold) {
    color: #6c6c6c;
}
.leaf {
    padding-left: 17px;
}
/* row highlight runs the full panel width, gutter included */
.selected {
    margin-left: -112px;
    padding-left: 129px;
    background: linear-gradient(to right, #959595 40px, #aeaeae 40px);
}

/* scene view */
.viewport {
    position: relative;
    flex: 1;
    min-height: 0;
    overflow: hidden;
    background: #474747;
}
.overlay {
    position: absolute;
    left: 0;
    top: 0;
}
.grid-lines {
    fill: none;
    stroke: #808080;
    stroke-opacity: .4;
}
.game-canvas {
    position: absolute;
    left: 189px;
    top: 46px;
    width: 565px;
    height: 423px;
    background: #a1a1a1;
    font: 12px "Liberation Sans", Arial, sans-serif;
    color: #6e6e6e;
}
.title {
    position: absolute;
    left: 249px;
    top: 137px;
}
.game-btn {
    position: absolute;
    left: 214px;
    width: 137px;
    height: 26px;
    background: #e8e8e8;
    border: 1px solid #c8c8c8;
    box-shadow: inset 0 0 0 1px #a8a8a8;
    border-radius: 2px;
}
.start { top: 166px; }
.credit { top: 216px; }
.exit { top: 264px; }

/* project */
.browser {
    flex: 1;
    min-height: 0;
    display: grid;
    grid-template-columns: 145px minmax(0, 1fr);
}
.folders {
    border-right: 1px solid #999;
    overflow: hidden;
}
.folders li {
    display: flex;
    align-items: center;
    gap: 4px;
    height: 20px;
    padding-left: 38px;
    white-space: nowrap;
}
.folders li svg {
    color: #858585;
}
.folders li.head {
    padding-left: 4px;
    gap: 5px;
}
.folders li.head svg {
    color: #666;
}
.folders li.head .gold {
    color: #cf9b0c;
}
.folders li.root {
    margin-top: 19px;
    background: #aeaeae;
}
.files {
    background: #bebebe;
}
.crumb {
    height: 26px;
    padding: 3px 5px;
    background: #cecece;
    border-bottom: 1px solid #aaa;
}
.big-folder {
    display: block;
    margin: 28px 29px;
}

/* inspector */
.scroll {
    flex: 1;
    min-height: 0;
    display: grid;
    grid-template-columns: minmax(0, 1fr) 16px;
}
.content {
    overflow: hidden;
}
.cut {
    height: 7px;
    background: #cbcbcb;
    border-bottom: 1px solid #b8b8b8;
}
.inspector input[type="text"], textarea {
    width: 100%;
    height: 22px;
    padding: 0 2px;
    background: #f0f0f0;
    border: 1px solid #b7b7b7;
    border-top-color: #a0a0a0;
    border-radius: 4px;
}
.rect-transform {
    padding: 9px 6px 8px 24px;
}
.rect-top {
    display: grid;
    grid-template-columns: 217px minmax(0, 1fr);
}
.anchor {
    display: grid;
    grid-template-columns: 61px;
    grid-template-rows: 16px 61px;
    justify-items: center;
    position: relative;
}
.center {
    font-size: 14px;
    line-height: 18px;
}
.middle {
    position: absolute;
    left: -15px;
    top: 24px;
    font-size: 13px;
    line-height: 16px;
    writing-mode: vertical-rl;
    transform: rotate(180deg);
}
.anchor-box {
    width: 61px;
    height: 61px;
    background: #b0b0b0;
}
.numbers {
    display: grid;
    grid-template-columns: repeat(3, minmax(0, 1fr));
    gap: 2px 5px;
}
.numbers label {
    height: 43px;
    line-height: 21px;
}
.numbers input {
    display: block;
}
.raw {
    display: flex;
    justify-content: flex-end;
    align-items: flex-end;
}
.raw button {
    width: 34px;
    height: 24px;
    background: #e2e2e2;
    border: 1px solid #b0b0b0;
    border-bottom-color: #888;
    border-radius: 0 3px 3px 0;
    color: #555;
    font-size: 13px;
}
.raw button:first-child {
    width: 30px;
    border-right: none;
    border-radius: 3px 0 0 3px;
}
.vec {
    display: grid;
    grid-template-columns: 215px repeat(3, minmax(0, 1fr));
    gap: 7px;
    height: 22px;
    margin-bottom: 3px;
    align-items: center;
}
.vec:last-child {
    margin-bottom: 0;
}
.vec label {
    display: grid;
    grid-template-columns: 15px minmax(0, 1fr);
}
.anchors-row {
    margin: 5px 0 1px;
}
.anchors-row .fold {
    margin: 0 4px 0 -15px;
}
.pivot-row {
    grid-template-columns: 213px repeat(3, minmax(0, 1fr));
    gap: 5px;
    margin-bottom: 13px;
}
.comp-head {
    display: flex;
    align-items: center;
    gap: 11px;
    height: 28px;
    padding: 0 15px 0 7px;
    background: #cbcbcb;
    border-top: 1px solid #7f7f7f;
    border-bottom: 1px solid #b8b8b8;
}
.comp-head h2 {
    flex: 1;
}
.comp-head > .fold {
    margin-right: -6px;
}
.comp-head .dimmed {
    color: #8a8a8a;
    margin-right: 20px;
}
.comp-head > input {
    margin: 0 -2px 0 -3px;
}
.comp-icons {
    display: flex;
    gap: 13px;
}
.t-icon {
    width: 16px;
    height: 16px;
    margin-left: 2px;
    background: #555;
    border-radius: 2px;
    color: #c2c2c2;
    font-size: 13px;
    font-weight: 700;
    line-height: 16px;
    text-align: center;
}
.comp-body {
    padding: 7px 6px 0 24px;
}
.comp-body.cull {
    padding: 4px 6px 7px 24px;
}
.row {
    display: grid;
    grid-template-columns: 221px minmax(0, 1fr);
    align-items: center;
    height: 25px;
}
.row.sub {
    grid-template-columns: 202px minmax(0, 1fr);
    padding-left: 19px;
}
input[type="checkbox"] {
    appearance: none;
    display: grid;
    justify-items: center;
    align-items: start;
    width: 17px;
    height: 17px;
    background: #f0f0f0;
    border: 1px solid #b7b7b7;
    border-radius: 3px;
}
input[type="checkbox"]:checked::after {
    content: "";
    width: 6px;
    height: 10px;
    margin-top: 1px;
    border: solid #3c3c3c;
    border-width: 0 2px 2px 0;
    transform: rotate(40deg);
}
.text-label {
    display: block;
}
.inspector textarea {
    display: block;
    height: 54px;
    padding: 2px 1px;
    resize: none;
    overflow: hidden;
}
h3 {
    height: 25px;
    line-height: 25px;
}
textarea + h3 {
    margin-top: 3px;
}
.object {
    display: flex;
    height: 22px;
    align-items: center;
    background: #ededed;
    border: 1px solid #b7b7b7;
    border-top-color: #a0a0a0;
    border-radius: 4px;
}
.object small {
    padding-left: 3px;
    color: #777;
    font-size: 11px;
    font-weight: 700;
}
.inspector .object input {
    flex: 1;
    height: 20px;
    padding: 0 1px;
    border: none;
    background: none;
}
.object button {
    width: 22px;
    height: 20px;
    background: #dedede;
}
.aligns {
    display: flex;
    gap: 14px;
}
.seg {
    display: flex;
    border: 1px solid #b0b0b0;
    border-bottom-color: #888;
    border-radius: 3px;
    overflow: hidden;
}
.seg button {
    width: 24px;
    height: 20px;
    background: #e4e4e4;
}
.seg .on {
    background: #b0b0b0;
}
.seg path {
    stroke: #444;
    stroke-width: 2;
    fill: none;
}
.seg .on path {
    stroke: #d8d8d8;
}
.scrollbar {
    display: flex;
    flex-direction: column;
    align-items: center;
    padding: 5px 0;
    border-left: 1px solid #adadad;
}
.up {
    transform: rotate(180deg);
}
.thumb {
    flex: 1;
    width: 13px;
    margin: 62px 0 174px;
    background: #999;
    border-radius: 6px;
}
.preview-bar {
    flex: none;
    display: flex;
    height: 27px;
    padding-left: 5px;
    background: #cbcbcb;
    border-top: 1px solid #999;
}
.preview-bar button {
    padding: 0 6px 0 4px;
    gap: 6px;
    border: solid #999;
    border-width: 0 1px;
}
.grip {
    flex: 1;
    align-self: center;
    height: 6px;
    margin: 0 4px;
    border: solid #888;
    border-width: 2px 0;
}
.more {
    display: flex;
    align-items: center;
    padding: 0 8px;
    border-left: 1px solid #999;
}
.preview {
    flex: none;
    height: 11px;
    background: #303030;
}
```
